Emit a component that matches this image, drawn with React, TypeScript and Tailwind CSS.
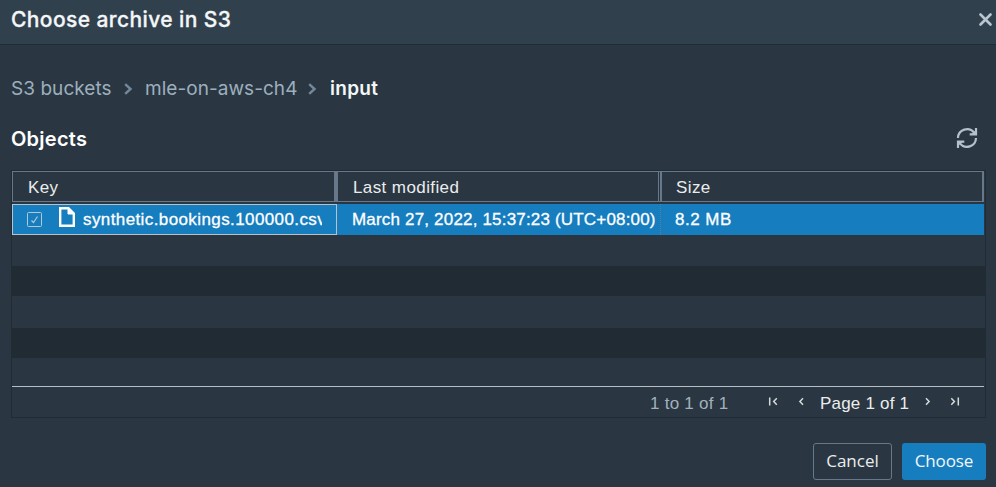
import type { ReactNode } from "react";

const helv = "font-['Liberation_Sans',Arial,sans-serif]";
const ember = "font-['Open_Sans','Noto_Sans',sans-serif]";

function Separator() {
  return (
    <svg className="mb-px h-3 w-[9px] shrink-0" viewBox="0 0 9 12" fill="none" stroke="#75879a" strokeWidth="2.400">
      <path d="M1.200 1.200 6.500 6 1.200 10.800" />
    </svg>
  );
}

function RefreshIcon() {
  return (
    <svg className="h-[22px] w-[22px]" viewBox="0 0 22 22" fill="none" stroke="#b4c1cc" strokeWidth="2.200">
      <path d="M2 11A9 9 0 0 1 18.200 5.800" />
      <path d="M20 11A9 9 0 0 1 3.800 16.200" />
      <path d="M20 1v6.300h-6.300" />
      <path d="M2 21v-6.300h6.300" />
      <path d="M20 7.300h-5l5-4.300zM2 14.700h5L2 19z" fill="#b4c1cc" stroke="none" />
    </svg>
  );
}

function FileIcon() {
  return (
    <svg className="h-5 w-4 shrink-0" viewBox="0 0 16 20" fill="none" stroke="#fff" strokeWidth="2.400">
      <path d="M1.200 1.200h8.300l5.300 5.300v12.300H1.200z" />
      <path d="M9 1v6h6z" fill="#fff" strokeWidth="1" />
    </svg>
  );
}

function PageIcon({ d, className }: { d: string; className: string }) {
  return (
    <svg className={`h-[9px] w-[10px] shrink-0 ${className}`} viewBox="0 0 10 9" fill="none" stroke="#d5dbdb" strokeWidth="1.500">
      <path d={d} />
    </svg>
  );
}

function HeaderCell({ children, className }: { children: ReactNode; className: string }) {
  return (
    <div className={`flex h-full items-center border-[#66788a] pt-[2px] text-[17px] tracking-[0.4px] text-[#eaeded] ${className}`}>
      {children}
    </div>
  );
}

export default function App() {
  return (
    <div className="flex h-[487px] w-[996px] flex-col overflow-hidden bg-[#2a3742] font-['Inter',sans-serif] whitespace-nowrap">
      <header className="flex h-[45px] shrink-0 items-center justify-between border-b border-[#212b34] bg-[#31404d] pr-[4px] pb-[5px] pl-[11px]">
        <h1 className="text-[21px] font-medium tracking-[0.4px] text-[#f4f7f8] [-webkit-text-stroke:0.3px_#f4f7f8]">Choose archive in S3</h1>
        <svg className="h-[13px] w-[13px]" viewBox="0 0 13 13" stroke="#b9c5cf" strokeWidth="2.600" strokeLinecap="round">
          <path d="m1.500 1.500 10 10M11.500 1.500l-10 10" />
        </svg>
      </header>

      <nav className="mt-[30px] ml-[11px] flex h-[28px] shrink-0 items-center text-[19px] tracking-[0.05px] text-[#9dafbd]">
        <span className="w-[113px]">S3 buckets</span>
        <Separator />
        <span className="ml-[12px] w-[163px]">mle-on-aws-ch4</span>
        <Separator />
        <span className="ml-[13px] font-semibold tracking-[0.3px] text-[#f4f7f8]">input</span>
      </nav>

      <div className="mt-[20px] flex h-[30px] shrink-0 items-center justify-between pr-[18px] pl-[11px]">
        <h2 className="pt-[2px] text-[20px] font-semibold tracking-[0.25px] text-white">Objects</h2>
        <RefreshIcon />
      </div>

      <section className={`mt-[17px] ml-[11px] flex h-[248px] w-[975px] shrink-0 flex-col border border-[#212b34] ${helv}`}>
        <div className="flex h-[31px] w-[972px] shrink-0 border-y border-l border-[#66788a]">
          <HeaderCell className="w-[325px] border-r-4 pl-[15px]">Key</HeaderCell>
          <HeaderCell className="w-[321px] border-r pl-[15px]">Last modified</HeaderCell>
          <HeaderCell className="ml-px w-[324px] border-x-2 pl-[14px]">Size</HeaderCell>
        </div>

        <div className="mt-[2px] flex h-[31px] w-[972px] shrink-0 bg-[#167dbf] text-[17px] text-white">
          <div className="flex w-[325px] items-center border border-[#b9c2c9] pl-[14px]">
            <svg className="h-[15px] w-[15px] shrink-0" viewBox="0 0 15 15" fill="none" stroke="#b3c7d6">
              <rect x=".5" y=".5" width="14" height="14" rx="1" />
              <path d="m4.500 8.500 2 2 4-6" strokeWidth="1.200" />
            </svg>
            <div className="mb-[5px] ml-[17px]">
              <FileIcon />
            </div>
            <span className="ml-[8px] w-[239px] overflow-hidden tracking-[0.4px] [-webkit-text-stroke:0.3px_white]">
              synthetic.bookings.100000.csv
            </span>
          </div>
          <div className="flex w-[324px] items-center border-r border-dotted border-[#5c7f99] pl-[15px] tracking-[0.18px] [-webkit-text-stroke:0.3px_white]">
            March 27, 2022, 15:37:23 (UTC+08:00)
          </div>
          <div className="flex items-center pl-[14px] tracking-[0.5px] [-webkit-text-stroke:0.3px_white]">8.2 MB</div>
        </div>

        <div className="h-[31px] shrink-0" />
        <div className="h-[30px] shrink-0 bg-[#212b34]" />
        <div className="h-[32px] shrink-0" />
        <div className="h-[30px] shrink-0 bg-[#212b34]" />
        <div className="h-[28px] shrink-0" />

        <div className="flex h-[31px] w-[972px] shrink-0 items-center border-t border-[#b5bec4] pt-[3px] text-[17px]">
          <span className="ml-[638px] w-[118px] tracking-[0.25px] text-[#a3b1bc]">1 to 1 of 1</span>
          <PageIcon className="mb-[4px]" d="M1.700.5v8M8.800 1.300 5.700 4.500l3.100 3.200" />
          <PageIcon className="mb-[4px] ml-[18px]" d="M7 1.300 3.900 4.500 7 7.700" />
          <span className="ml-[14px] w-[101px] tracking-[0.2px] text-[#eaeded]">Page 1 of 1</span>
          <PageIcon className="mb-[4px]" d="M5 1.300 8.100 4.500 5 7.700" />
          <PageIcon className="mb-[4px] ml-[19px]" d="M1.300 1.300 4.400 4.500 1.300 7.700M8.300.5v8" />
        </div>
      </section>

      <footer className={`mt-[25px] flex shrink-0 justify-end gap-[10px] pr-[10px] text-[17px] ${ember}`}>
        <button className="h-[37px] w-[79px] rounded-[3px] border border-[#66788a] pb-[2px] text-[#eaeded]">Cancel</button>
        <button className="h-[37px] w-[84px] rounded-[3px] bg-[#167dbf] pb-[2px] tracking-[-0.1px] text-[#f4f7f8]">Choose</button>
      </footer>
    </div>
  );
}
